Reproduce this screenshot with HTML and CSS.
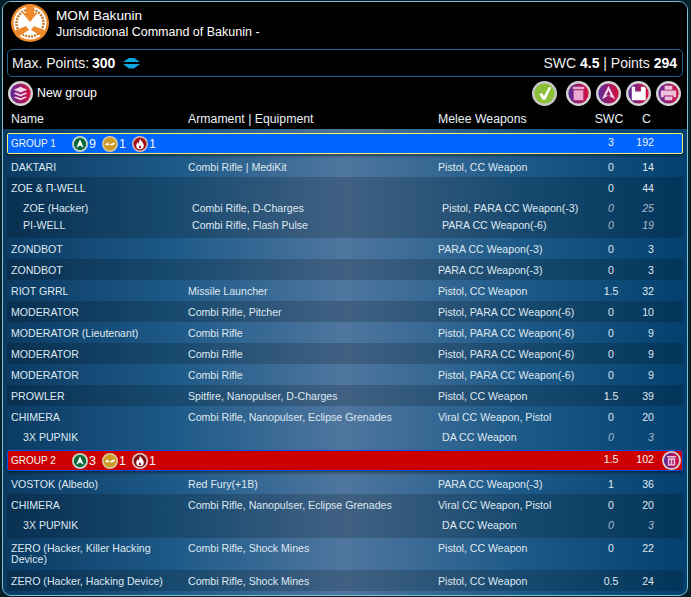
FILE: index.html
```html
<!DOCTYPE html>
<html lang="en">
<head>
  <meta charset="UTF-8" />
  <title>MOM Bakunin</title>
  <link rel="stylesheet" href="styles.css">
</head>
<body>
  <div class="frame">
    <div class="top">
      <header class="army">
        <svg class="logo" width="38" height="38" viewBox="0 0 38 38">
          <circle cx="19" cy="19" r="19" fill="#ee8a2a"/>
          <circle cx="19" cy="19" r="16.5" fill="#fff"/>
          <circle cx="19" cy="19" r="13.5" fill="none" stroke="#c87a30" stroke-width="2.500" stroke-dasharray="2 1"/>
          <path d="M15 1h8v8h3.500L19 18l-7.500-9H15z" fill="#ee8a2a"/>
          <path d="M23 22l12 5-3 6-12-7zM15 22L3 27l3 6 12-7z" fill="#ee8a2a"/>
        </svg>
        <div class="army-text">
          <div class="army-name">MOM Bakunin</div>
          <div class="army-sub">Jurisdictional Command of Bakunin -</div>
        </div>
      </header>

      <div class="points">
        <div class="points-left">
          Max. Points: <b>300</b>
          <svg class="arrows" width="17" height="12" viewBox="0 0 17 12">
            <path d="M0 5L6 1h5l6 4zM0 7h17l-6 4.500H6z" fill="#10a8e0"/>
          </svg>
        </div>
        <div>SWC <b>4.5</b> | Points <b>294</b></div>
      </div>

      <div class="tools">
        <div class="new-group">
          <svg class="btn" width="25" height="25" viewBox="0 0 26 26">
            <use href="#purple-disc"/>
            <path d="M6 9l7-3 7 3-7 3zM6 13l2-1 5 2 5-2 2 1-7 3zM6 17l2-1 5 2 5-2 2 1-7 3z" fill="#f4d4e8"/>
          </svg>
          New group
        </div>
        <div class="tool-icons">
          <svg class="btn btn-ok" width="25" height="25" viewBox="0 0 26 26">
            <circle cx="13" cy="13" r="13" fill="#c8c8c8"/>
            <circle cx="13" cy="13" r="10.500" fill="#8cc038"/>
            <path d="M7.500 13.500l3-1 2 3 5-9h2.500l-6 13h-3z" fill="#fff"/>
          </svg>
          <svg class="btn" width="25" height="25" viewBox="0 0 26 26">
            <use href="#purple-disc"/>
            <path d="M7 6h12v2.500H7zM8 9.500h10V20H8z" fill="#e8a8d0"/>
          </svg>
          <svg class="btn" width="25" height="25" viewBox="0 0 26 26">
            <use href="#purple-disc"/>
            <path d="M13 5l7 14-7-4-7 4zM13 10l-2.500 5h5z" fill="#f4d4e8" fill-rule="evenodd"/>
          </svg>
          <svg class="btn" width="25" height="25" viewBox="0 0 26 26">
            <use href="#purple-disc"/>
            <path d="M6 6h13l1.500 1.500V20H6zM9.500 6v5h6V6z" fill="#fff" fill-rule="evenodd"/>
          </svg>
          <svg class="btn" width="25" height="25" viewBox="0 0 26 26">
            <use href="#purple-disc"/>
            <path d="M9 5h8v4H9zM5 10h16v7h-3v-2H8v2H5zM9 16h8v4H9z" fill="#f0c0dc"/>
          </svg>
        </div>
      </div>

      <div class="row head">
        <div>Name</div>
        <div>Armament | Equipment</div>
        <div>Melee Weapons</div>
        <div class="num">SWC</div>
        <div class="cost">C</div>
      </div>
    </div>

    <div class="list">
      <div class="row group group-blue">
        <div class="group-title">
          <span class="group-name">GROUP 1</span>
          <span class="order"><svg width="16" height="16" viewBox="0 0 15 15"><use href="#order-reg"/></svg>9</span>
          <span class="order"><svg width="16" height="16" viewBox="0 0 15 15"><use href="#order-irr"/></svg>1</span>
          <span class="order"><svg width="16" height="16" viewBox="0 0 15 15"><use href="#order-imp-red"/></svg>1</span>
        </div>
        <div></div>
        <div></div>
        <div class="num">3</div>
        <div class="cost">192</div>
      </div>

      <div class="row"><div class="name">DAKTARI</div><div>Combi Rifle | MediKit</div><div>Pistol, CC Weapon</div><div class="num">0</div><div class="cost">14</div></div>

      <div class="unit unit-tall alt">
        <div class="row"><div class="name">ZOE &amp; П-WELL</div><div></div><div></div><div class="num">0</div><div class="cost">44</div></div>
        <div class="row sub"><div class="name">ZOE (Hacker)</div><div>Combi Rifle, D-Charges</div><div>Pistol, PARA CC Weapon(-3)</div><div class="num">0</div><div class="cost">25</div></div>
        <div class="row sub sub-tight"><div class="name">PI-WELL</div><div>Combi Rifle, Flash Pulse</div><div>PARA CC Weapon(-6)</div><div class="num">0</div><div class="cost">19</div></div>
      </div>

      <div class="row"><div class="name">ZONDBOT</div><div></div><div>PARA CC Weapon(-3)</div><div class="num">0</div><div class="cost">3</div></div>
      <div class="row alt"><div class="name">ZONDBOT</div><div></div><div>PARA CC Weapon(-3)</div><div class="num">0</div><div class="cost">3</div></div>
      <div class="row"><div class="name">RIOT GRRL</div><div>Missile Launcher</div><div>Pistol, CC Weapon</div><div class="num">1.5</div><div class="cost">32</div></div>
      <div class="row alt"><div class="name">MODERATOR</div><div>Combi Rifle, Pitcher</div><div>Pistol, PARA CC Weapon(-6)</div><div class="num">0</div><div class="cost">10</div></div>
      <div class="row"><div class="name">MODERATOR (Lieutenant)</div><div>Combi Rifle</div><div>Pistol, PARA CC Weapon(-6)</div><div class="num">0</div><div class="cost">9</div></div>
      <div class="row alt"><div class="name">MODERATOR</div><div>Combi Rifle</div><div>Pistol, PARA CC Weapon(-6)</div><div class="num">0</div><div class="cost">9</div></div>
      <div class="row"><div class="name">MODERATOR</div><div>Combi Rifle</div><div>Pistol, PARA CC Weapon(-6)</div><div class="num">0</div><div class="cost">9</div></div>
      <div class="row alt"><div class="name">PROWLER</div><div>Spitfire, Nanopulser, D-Charges</div><div>Pistol, CC Weapon</div><div class="num">1.5</div><div class="cost">39</div></div>

      <div class="unit">
        <div class="row"><div class="name">CHIMERA</div><div>Combi Rifle, Nanopulser, Eclipse Grenades</div><div>Viral CC Weapon, Pistol</div><div class="num">0</div><div class="cost">20</div></div>
        <div class="row sub"><div class="name">3X PUPNIK</div><div></div><div>DA CC Weapon</div><div class="num">0</div><div class="cost">3</div></div>
      </div>

      <div class="row group group-red">
        <div class="group-title">
          <span class="group-name">GROUP 2</span>
          <span class="order"><svg width="16" height="16" viewBox="0 0 15 15"><use href="#order-reg"/></svg>3</span>
          <span class="order"><svg width="16" height="16" viewBox="0 0 15 15"><use href="#order-irr"/></svg>1</span>
          <span class="order"><svg width="16" height="16" viewBox="0 0 15 15"><use href="#order-imp-dark"/></svg>1</span>
        </div>
        <div></div>
        <div></div>
        <div class="num">1.5</div>
        <div class="cost">102</div>
        <svg class="group-del" width="19" height="19" viewBox="0 0 26 26">
          <use href="#purple-disc"/>
          <path d="M7 7h12v2H7zM8 10h10v10H8zM10 12v6h2v-6zM14 12v6h2v-6z" fill="#f0c0dc" fill-rule="evenodd"/>
        </svg>
      </div>

      <div class="row"><div class="name">VOSTOK (Albedo)</div><div>Red Fury(+1B)</div><div>PARA CC Weapon(-3)</div><div class="num">1</div><div class="cost">36</div></div>

      <div class="unit alt">
        <div class="row"><div class="name">CHIMERA</div><div>Combi Rifle, Nanopulser, Eclipse Grenades</div><div>Viral CC Weapon, Pistol</div><div class="num">0</div><div class="cost">20</div></div>
        <div class="row sub"><div class="name">3X PUPNIK</div><div></div><div>DA CC Weapon</div><div class="num">0</div><div class="cost">3</div></div>
      </div>

      <div class="row row-wrap"><div class="name">ZERO (Hacker, Killer Hacking Device)</div><div>Combi Rifle, Shock Mines</div><div>Pistol, CC Weapon</div><div class="num">0</div><div class="cost">22</div></div>
      <div class="row alt"><div class="name">ZERO (Hacker, Hacking Device)</div><div>Combi Rifle, Shock Mines</div><div>Pistol, CC Weapon</div><div class="num">0.5</div><div class="cost">24</div></div>
    </div>
  </div>

  <!-- shared icon parts -->
  <svg class="defs" width="0" height="0">
    <defs>
      <linearGradient id="purple" x1="0" x2="1" y1="0" y2="0">
        <stop offset="0" stop-color="#5a2a98"/>
        <stop offset="1" stop-color="#d8103c"/>
      </linearGradient>
      <g id="purple-disc">
        <circle cx="13" cy="13" r="13" fill="#d4d4d4"/>
        <circle cx="13" cy="13" r="10.500" fill="url(#purple)"/>
      </g>
      <g id="order-reg">
        <circle cx="7.500" cy="7.500" r="7.500" fill="#c4d4cc"/>
        <circle cx="7.500" cy="7.500" r="5.800" fill="#0a6a38"/>
        <path d="M7.500 3l3.500 8-3.500-2-3.500 2z" fill="#fff"/>
      </g>
      <g id="order-irr">
        <circle cx="7.500" cy="7.500" r="7.500" fill="#d8c8a0"/>
        <circle cx="7.500" cy="7.500" r="6" fill="#d09c28"/>
        <path d="M3 8l2-2 2 2 2-1 3-1v1.500l-3 1.500-2-1-2 1z" fill="#fff"/>
      </g>
      <g id="order-imp-red">
        <circle cx="7.500" cy="7.500" r="7.500" fill="#d8b8b8"/>
        <circle cx="7.500" cy="7.500" r="6" fill="#a01010"/>
        <path d="M7.500 2.500c.8 2 3.500 3.500 3.500 6.500a3.500 3.500 0 0 1-7 0c0-1.500.7-2.500 1.300-3.200.2.800.5 1.200.9 1.400zM7.500 8.500L6.300 10.500a1.300 1.300 0 0 0 2.400 0z" fill="#fff" fill-rule="evenodd"/>
      </g>
      <g id="order-imp-dark">
        <circle cx="7.500" cy="7.500" r="7.500" fill="#e0d0d0"/>
        <circle cx="7.500" cy="7.500" r="6" fill="#801010"/>
        <path d="M7.500 2.500c.8 2 3.500 3.500 3.500 6.500a3.500 3.500 0 0 1-7 0c0-1.500.7-2.500 1.300-3.200.2.800.5 1.200.9 1.400zM7.500 8.500L6.300 10.500a1.300 1.300 0 0 0 2.400 0z" fill="#fff" fill-rule="evenodd"/>
      </g>
    </defs>
  </svg>
</body>
</html>
```

FILE: styles.css
```css
* {
  margin: 0;
  padding: 0;
  box-sizing: border-box;
}

html, body {
  height: 100%;
}

body {
  overflow: hidden;
  background-color: #06202c;
  font-family: "Liberation Sans", Arial, sans-serif;
  font-size: 10.6px;
  color: #dfe8f0;
}

.defs {
  display: block;
  height: 0;
}

/* outer panel */
.frame {
  width: 686px;
  height: 595px;
  margin: 1px 0 0 2px;
  border: 1px solid #86c0d0;
  border-radius: 9px;
  overflow: hidden;
  background: linear-gradient(90deg, #0a3a62 0%, #1e5a88 25%, #4f769f 50%, #1e5a88 75%, #04406e 100%);
}

.top {
  background-color: #000;
  height: 127px;
  padding-top: 2px;
}

.army {
  display: flex;
  align-items: center;
  gap: 7px;
  padding-left: 8px;
  height: 38px;
}

.army-text {
  padding-top: 2px;
}

.army-name {
  font-size: 13.6px;
  color: #fff;
  line-height: 16px;
}

.army-sub {
  font-size: 12.5px;
  color: #fff;
  line-height: 16px;
}

.points {
  display: flex;
  justify-content: space-between;
  align-items: center;
  height: 28px;
  margin: 7px 4px 0;
  padding: 0 5px 0 4px;
  border: 1px solid #1f6090;
  border-radius: 5px;
  font-size: 14px;
  color: #f0f0f0;
}

.points b {
  color: #fff;
}

.points-left {
  display: flex;
  align-items: center;
  gap: 3px;
}

.arrows {
  margin-left: 5px;
}

.tools {
  display: flex;
  justify-content: space-between;
  align-items: center;
  height: 32px;
  padding: 0 6px 0 5px;
}

.new-group {
  display: flex;
  align-items: center;
  gap: 4px;
  font-size: 12.4px;
  color: #fff;
}

.tool-icons {
  display: flex;
  gap: 5px;
}

.btn-ok {
  margin-right: 4px;
}

/* every table line uses the same columns */
.row {
  display: grid;
  grid-template-columns: 177px 250px 154px 38px 24px;
  align-items: center;
  height: 21px;
  margin: 0 4px;
  padding-left: 4px;
}

.num {
  text-align: center;
}

.cost {
  text-align: right;
}

.name {
  padding-right: 12px;
}

.head {
  height: 20px;
  font-size: 12.3px;
  color: #e8f0f4;
}

.head .num {
  padding-right: 4px;
}

.head .cost {
  padding-right: 3px;
}

.list {
  padding-top: 4px;
}

.alt {
  background-color: rgba(0, 0, 0, 0.18);
}

.unit {
  margin: 0 4px;
  padding-bottom: 3px;
}

.unit-tall {
  padding-bottom: 6px;
}

.unit .row {
  margin: 0;
}

.unit .sub {
  height: 20px;
  grid-template-columns: 169px 250px 150px 38px 24px;
  padding-left: 16px;
}

.sub .num,
.sub .cost {
  font-style: italic;
  color: #a8bccc;
}

.unit .sub-tight {
  height: 14px;
}

.group {
  position: relative;
  color: #f4f4f4;
  border: 1px solid #f0f070;
  border-radius: 2px;
  padding-left: 3px;
  margin-bottom: 2px;
  box-shadow: 0 2px 3px rgba(0, 0, 0, 0.4);
}

.group-blue {
  background-color: #0066ff;
}

.group-red {
  background-color: #cc0000;
  border-color: #0a50e0;
}

.group .num,
.group .cost {
  position: relative;
  top: -2px;
}

.group-title {
  display: flex;
  align-items: center;
  white-space: nowrap;
  font-size: 12.5px;
}

.group-name {
  width: 61px;
  font-size: 10px;
}

.order {
  display: flex;
  align-items: center;
  gap: 1px;
  width: 30px;
}

.group-del {
  position: absolute;
  right: 1px;
  top: 0;
}

.row-wrap {
  height: 32px;
  align-items: start;
  padding-top: 5px;
  line-height: 11px;
}
```
